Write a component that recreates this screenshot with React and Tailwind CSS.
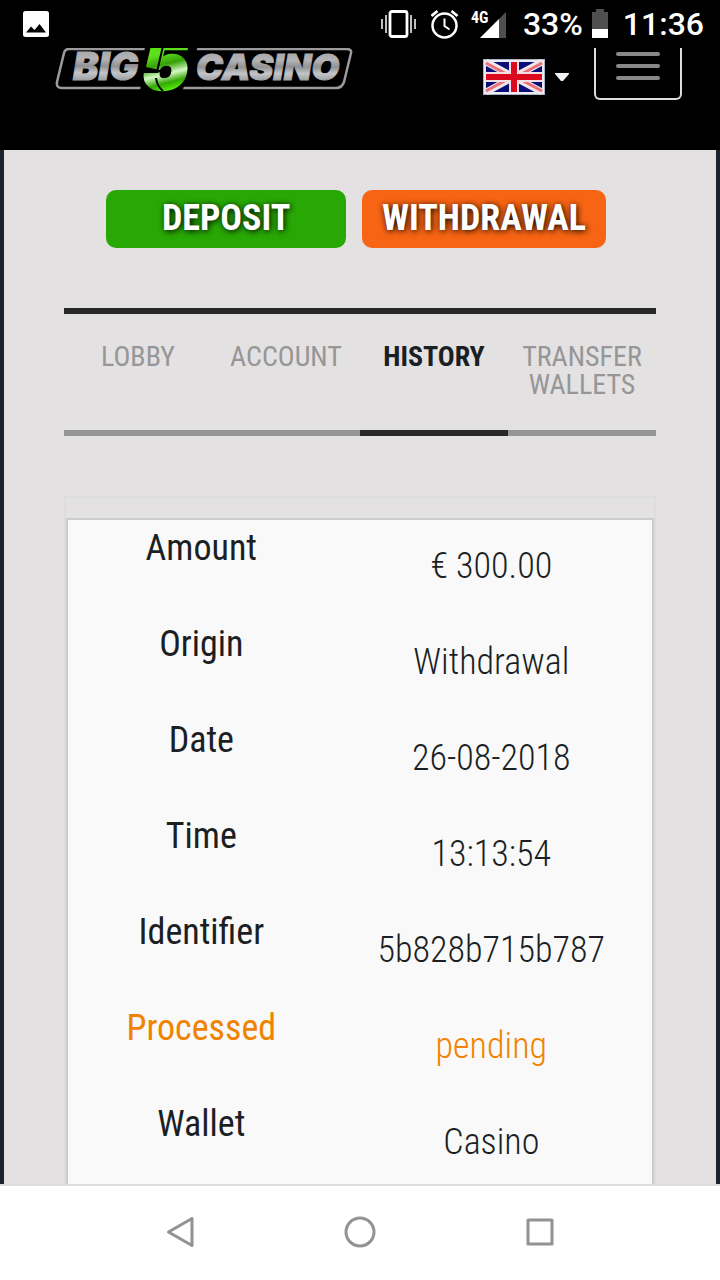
import { useState } from "react";

const tabs = ["Lobby", "Account", "History", "Transfer Wallets"];

const rows = [
    { label: "Amount", value: "€ 300.00" },
    { label: "Origin", value: "Withdrawal" },
    { label: "Date", value: "26-08-2018" },
    { label: "Time", value: "13:13:54" },
    { label: "Identifier", value: "5b828b715b787" },
    { label: "Processed", value: "pending", highlight: true },
    { label: "Wallet", value: "Casino" },
];

function StatusBar() {
    return (
        <div className="relative z-10 flex h-12 shrink-0 items-center justify-between bg-black pl-[23px] pr-4 font-['Roboto',sans-serif] text-white">
            <svg width="26" height="26" viewBox="0 0 26 26" aria-hidden="true">
                <rect width="26" height="26" rx="2.5" fill="#fff" />
                <path d="M3 21.5 L8 15.5 L11.5 19 L16.5 13 L23 21.5 Z" fill="#000" />
            </svg>

            <div className="flex items-center">
                {/* Vibrate */}
                <svg width="36" height="30" viewBox="0 0 36 30" fill="none" stroke="#fff" aria-hidden="true">
                    <rect x="9" y="2.5" width="17" height="25" rx="2" strokeWidth="2.8" />
                    <path d="M5 6V24M30 6V24M1 10V20M34 10V20" strokeWidth="1.5" />
                </svg>
                {/* Alarm */}
                <svg width="28" height="30" viewBox="0 0 28 30" fill="none" stroke="#fff" className="ml-[14px]" aria-hidden="true">
                    <circle cx="13.5" cy="16.5" r="12" strokeWidth="2.5" />
                    <path d="M13.5 9.5V17L18.5 20.5" strokeWidth="2" />
                    <path d="M0.5 7L6.5 2M26.5 7L20.5 2" strokeWidth="2.8" />
                </svg>
                {/* Signal */}
                <svg width="36" height="30" viewBox="0 0 36 30" className="ml-3" aria-hidden="true">
                    <path d="M35 3V29H9Z" fill="#4f4f4f" />
                    <path d="M28 10V29H9Z" fill="#fff" />
                    <text x="0" y="14" fontSize="16" fontWeight="700" fill="#fff" className="font-['Roboto_Condensed','Roboto',sans-serif]">4G</text>
                </svg>
                <span className="ml-4 text-[32px] leading-8 font-medium">33%</span>
                <svg width="16" height="30" viewBox="0 0 16 30" className="ml-[9px]" aria-hidden="true">
                    <path d="M4 0H12V3H16V29H0V3H4Z" fill="#4f4f4f" />
                    <path d="M0 20H16V29H0Z" fill="#fff" />
                </svg>
                <span className="ml-[15px] text-[32px] leading-8 font-medium">11:36</span>
            </div>
        </div>
    );
}

function Logo() {
    return (
        <svg width="300" height="46" viewBox="0 0 300 46" className="overflow-visible" role="img" aria-label="Big 5 Casino">
            <defs>
                <linearGradient id="silver" x1="0" y1="0" x2="0" y2="1">
                    <stop offset="0.1" stopColor="#a4a4a6" />
                    <stop offset="0.35" stopColor="#b4b4b6" />
                    <stop offset="0.5" stopColor="#929294" />
                    <stop offset="0.65" stopColor="#c4c5c8" />
                    <stop offset="0.8" stopColor="#a0a1a4" />
                </linearGradient>
                <linearGradient id="green" gradientUnits="userSpaceOnUse" x1="108" y1="-4" x2="120" y2="43">
                    <stop offset="0" stopColor="#58e60c" />
                    <stop offset="0.2" stopColor="#5fdc20" />
                    <stop offset="0.42" stopColor="#33a004" />
                    <stop offset="0.62" stopColor="#d3f7c4" />
                    <stop offset="0.8" stopColor="#35a805" />
                    <stop offset="1" stopColor="#5cff0a" />
                </linearGradient>
            </defs>
            <path d="M15 1H292Q298 1 297 5L290 34Q288 40 282 40H8Q2 40 3 34L10 5Q11 1 15 1Z" fill="none" stroke="#9b9b9d" strokeWidth="2.5" />
            <path d="M91 -2H144L128 44H86Z" fill="#000" />
            <g fill="url(#silver)" stroke="url(#silver)" strokeWidth="1" fontWeight="900" fontStyle="italic" className="font-['Inter',sans-serif]">
                <text x="19" y="32" fontSize="38">BIG</text>
                <text x="142" y="32" fontSize="36">CASINO</text>
            </g>
            <text x="88" y="41" fontSize="70" fontWeight="900" fontStyle="italic" fill="url(#green)" stroke="url(#green)" strokeWidth="2.5" className="font-['Inter',sans-serif]">5</text>
            {/* Cuts through the numeral */}
            <path d="M109 -2L103 24H87M102 30Q103 38 109 43" fill="none" stroke="#000" strokeWidth="2" />
        </svg>
    );
}

function Flag() {
    return (
        <svg width="62" height="36" viewBox="0 0 62 36" aria-hidden="true">
            <rect x="0.5" y="0.5" width="61" height="35" fill="#eceaf2" stroke="#a9b3c6" />
            <rect x="3" y="3" width="56" height="30" fill="#0a0f78" />
            <path d="M3 3L59 33M59 3L3 33" stroke="#f3e6ea" strokeWidth="7" />
            <path d="M3 4L29 18M59 4L33 18M3 32L29 18M59 32L33 18" stroke="#ea7079" strokeWidth="3" />
            <path d="M31 3V33M3 18H59" stroke="#f3dfe4" strokeWidth="10" />
            <path d="M31 3V33M3 18H59" stroke="#dc0a1e" strokeWidth="6" />
        </svg>
    );
}

function Header() {
    return (
        <header className="flex h-[102px] shrink-0 items-start justify-between bg-black pl-[54px] pr-[38px]">
            <a href="#home">
                <Logo />
            </a>
            <div className="flex items-start">
                <button type="button" aria-label="Language" className="mt-[11px] flex items-center gap-[9px]">
                    <Flag />
                    <svg width="16" height="9" viewBox="0 0 16 9" aria-hidden="true">
                        <path d="M1 0H15V1L9 8H7L1 1Z" fill="#f2f2f2" />
                    </svg>
                </button>
                <button
                    type="button"
                    aria-label="Menu"
                    className="ml-6 flex h-[52px] w-[88px] flex-col items-center gap-2 rounded-b-md border-2 border-t-0 border-[#ddd] pt-1"
                >
                    <span className="h-1 w-11 rounded-full bg-[#888]"></span>
                    <span className="h-1 w-11 rounded-full bg-[#888]"></span>
                    <span className="h-1 w-11 rounded-full bg-[#888]"></span>
                </button>
            </div>
        </header>
    );
}

function NavigationBar() {
    return (
        <nav className="flex h-24 shrink-0 justify-center border-t-2 border-[#dedede] bg-white pb-0.5">
            <button type="button" aria-label="Back" className="flex w-1/4 items-center justify-center">
                <svg width="32" height="32" viewBox="0 0 32 32" fill="none" stroke="#929292" strokeWidth="3" strokeLinejoin="round">
                    <path d="M28 2.5V29.5L4.5 16Z" />
                </svg>
            </button>
            <button type="button" aria-label="Home" className="flex w-1/4 items-center justify-center">
                <svg width="32" height="32" viewBox="0 0 32 32" fill="none" stroke="#929292" strokeWidth="3">
                    <circle cx="16" cy="16" r="14" />
                </svg>
            </button>
            <button type="button" aria-label="Recent apps" className="flex w-1/4 items-center justify-center">
                <svg width="32" height="32" viewBox="0 0 32 32" fill="none" stroke="#929292" strokeWidth="3" strokeLinejoin="round">
                    <rect x="4" y="4" width="24" height="24" />
                </svg>
            </button>
        </nav>
    );
}

export default function App() {
    const [activeTab, setActiveTab] = useState("History");

    return (
        <div className="flex h-screen flex-col bg-[#1d232b] font-['Roboto_Condensed','Roboto',sans-serif] text-[#1b1f24]">
            <StatusBar />
            <Header />

            <main className="mx-1 min-h-0 flex-1 overflow-hidden bg-[#e3e1e2] px-[60px] pt-10">
                <div className="flex justify-center gap-4 pr-2 text-[36px] font-bold text-white">
                    <button type="button" className="h-[58px] w-60 rounded-[10px] bg-[#28a805] pb-0.5 leading-[54px] uppercase text-shadow-[1px_1px_6px_#000]">
                        Deposit
                    </button>
                    <button type="button" className="h-[58px] rounded-[10px] bg-[#f76413] px-5 pb-0.5 leading-[54px] uppercase text-shadow-[1px_1px_6px_#000]">
                        Withdrawal
                    </button>
                </div>

                {/* Tabs */}
                <div className="mt-[60px] flex border-t-[6px] border-[#282828]">
                    {tabs.map((tab) => (
                        <button
                            key={tab}
                            type="button"
                            onClick={() => setActiveTab(tab)}
                            className={`flex h-[122px] w-1/4 justify-center border-b-[6px] pt-[29px] text-[28px] leading-7 uppercase ${
                                tab === activeTab ? "border-[#282828] font-bold" : "border-[#969696] text-[#969696]"
                            }`}
                        >
                            {tab}
                        </button>
                    ))}
                </div>

                {/* Transaction details */}
                <div className="mt-[60px] border-2 border-[#dedddd] pt-5">
                    <table className="w-full table-fixed border-separate border-spacing-0 border-2 border-[#ccc] bg-[#f9f9f9] text-center text-[36px] leading-[56px]">
                        <tbody>
                            {rows.map((row) => (
                                <tr key={row.label} className={row.highlight ? "h-24 text-[#f08300]" : "h-24"}>
                                    <th scope="row" className="w-[46%] p-0 pr-0.5 align-top font-normal">{row.label}</th>
                                    <td className="p-0 pt-[18px] pr-1.5 align-top font-light">{row.value}</td>
                                </tr>
                            ))}
                        </tbody>
                    </table>
                </div>
            </main>

            <NavigationBar />
        </div>
    );
}
